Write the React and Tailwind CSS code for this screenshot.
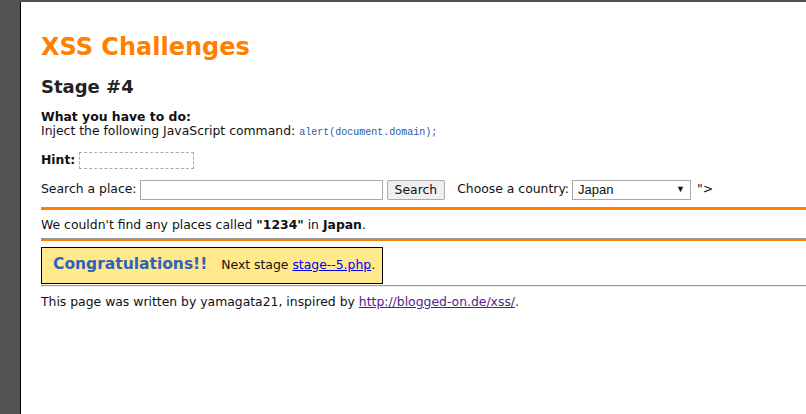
import React from 'react';

const App = () => {
  return (
    <div className="min-h-[414px] bg-[#535353] pt-[2px] pl-[20px] overflow-hidden" style={{ fontFamily: '"DejaVu Sans", Verdana, sans-serif' }}>
      <div className="min-h-[412px] bg-white border-l border-black pl-[20px] text-[12.4px] text-[#111]">
        <h1 className="pt-[30px] text-[24px] font-bold text-[#ff8000] leading-[30px]">XSS Challenges</h1>

        <h2 className="mt-[14px] text-[18px] font-bold text-[#222] leading-[22px]">Stage #4</h2>

        <div className="mt-[12px] leading-[14px]">
          <div className="font-bold">What you have to do:</div>
          <div>
            Inject the following JavaScript command:{' '}
            <code className="text-[10px] text-[#2b5aa0]" style={{ fontFamily: '"Liberation Mono", monospace' }}>alert(document.domain);</code>
          </div>
        </div>

        <div className="mt-[11px] flex items-center gap-[4px]">
          <span className="font-bold">Hint:</span>
          <span className="inline-block w-[115px] h-[17px] border border-dashed border-[#aaa]" />
        </div>

        <div className="mt-[10px] flex items-center">
          <span>Search a place:</span>
          <input className="ml-[3px] w-[243px] h-[20px] border border-[#a9a9a9] px-1" />
          <button className="ml-[4px] h-[20px] px-[7px] border border-[#a9a9a9] bg-[#efefef] rounded-[2px] text-[12.4px]">Search</button>
          <span className="ml-[12px]">Choose a country:</span>
          <div className="ml-[3px] w-[119px] h-[20px] border border-[#a9a9a9] flex items-center justify-between px-[5px] text-[13px]" style={{ fontFamily: '"Liberation Sans", Arial, sans-serif' }}>
            <span>Japan</span>
            <span className="text-[9px]">▼</span>
          </div>
          <span className="ml-[6px]">"&gt;</span>
        </div>

        <div className="mt-[7px] border-t border-[#999] h-[3px] bg-[#ff8000]" />

        <div className="mt-[7px] leading-[15px]">
          We couldn't find any places called <b>"1234"</b> in <b>Japan</b>.
        </div>

        <div className="mt-[6px] border-t border-[#999] h-[3px] bg-[#ff8000]" />

        <div className="mt-[6px] w-[342px] h-[37px] border border-black bg-[#ffe98a] flex items-center pl-[11px] whitespace-nowrap">
          <span className="text-[15.5px] font-bold text-[#2f62c0]">Congratulations!!</span>
          <span className="ml-[14px]">
            Next stage <a href="#" className="underline text-[#0000ee]">stage--5.php</a>.
          </span>
        </div>

        <div className="mt-[1px] h-[2px] border-t border-[#999] bg-[#eee]" />

        <div className="mt-[7px] leading-[15px]">
          This page was written by yamagata21, inspired by{' '}
          <a href="#" className="underline text-[#551a8b]">http://blogged-on.de/xss/</a>.
        </div>
      </div>
    </div>
  );
};

export default App;
